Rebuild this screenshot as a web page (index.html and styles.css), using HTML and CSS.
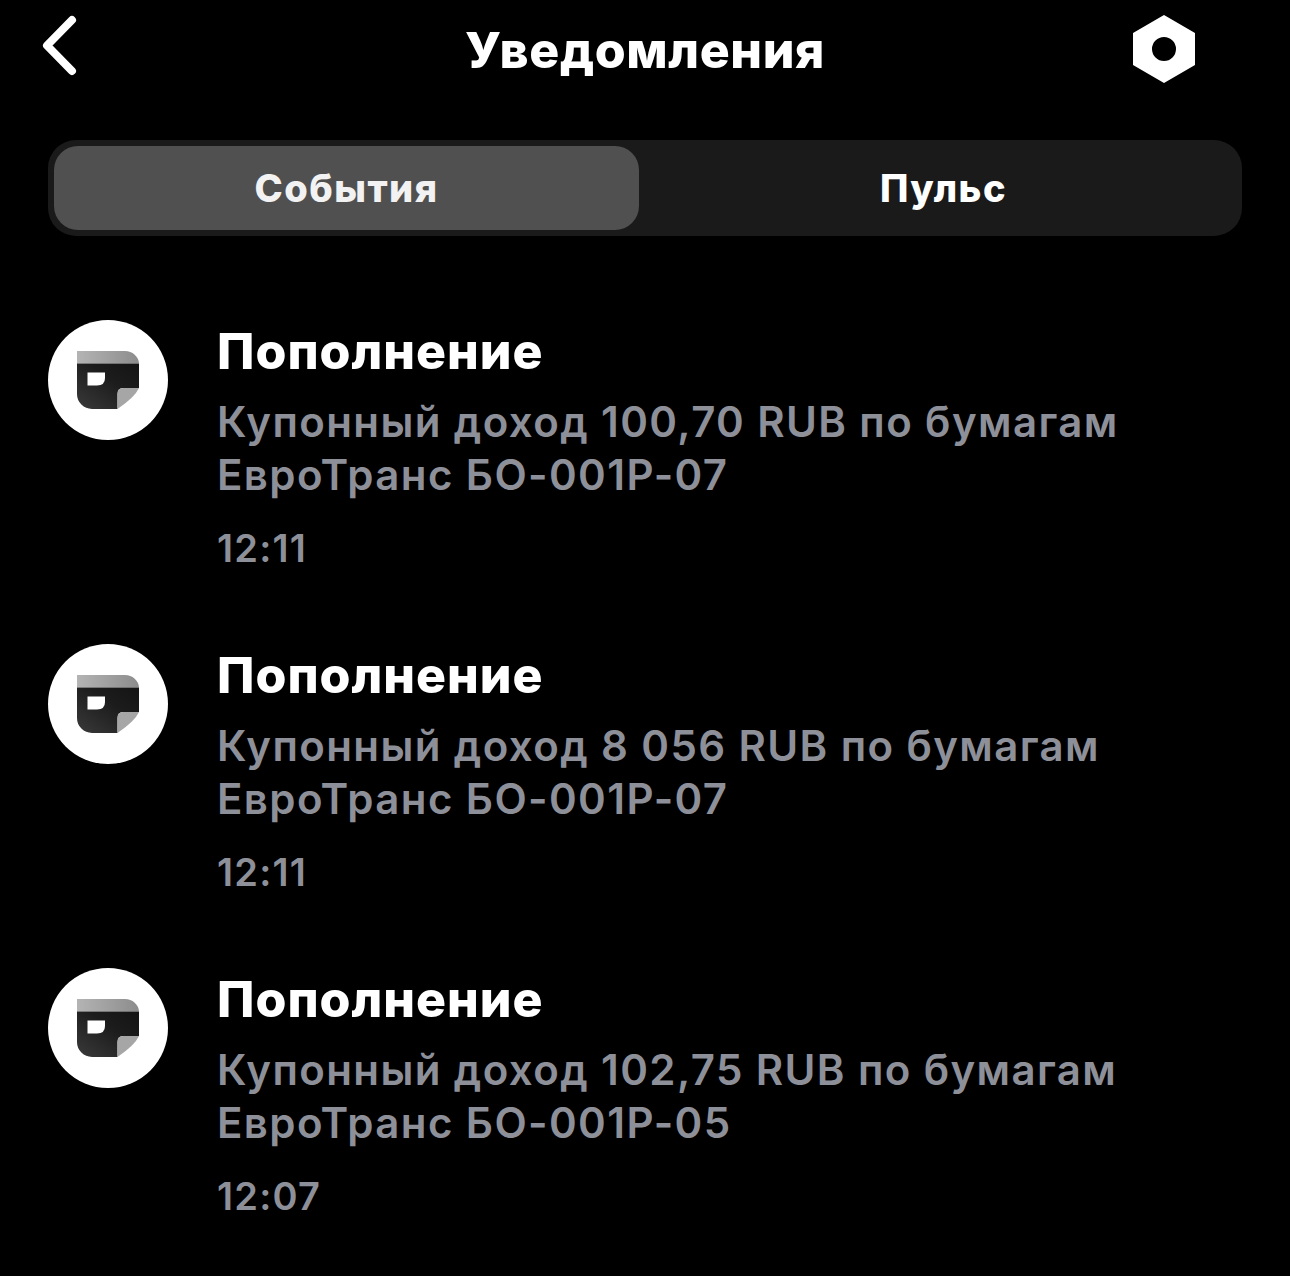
FILE: index.html
```html
<!DOCTYPE html>
<html>
<head>
    <title>Уведомления</title>
    <link rel="stylesheet" href="styles.css">
</head>
<body>
    <div class="header">
        <svg class="back" width="40" height="64" viewBox="0 0 40 64">
            <path d="M32 6 L7 31.5 L32 57" fill="none" stroke="#fff" stroke-width="8" stroke-linecap="round" stroke-linejoin="round"/>
        </svg>
        <h1>Уведомления</h1>
        <svg class="gear" width="64" height="68" viewBox="0 0 64 68">
            <path fill="#fff" fill-rule="evenodd" d="M32 0 L63 18 L63 50 L32 68 L1 50 L1 18 Z M32 22 A12 12 0 1 0 32 46 A12 12 0 1 0 32 22 Z"/>
        </svg>
    </div>

    <div class="tabs">
        <div class="tab active">События</div>
        <div class="tab">Пульс</div>
    </div>

    <div class="list">
        <div class="item">
            <div class="avatar">
                <svg width="62" height="58" viewBox="0 0 62 58">
                    <use href="#note"/>
                </svg>
            </div>
            <div class="text">
                <div class="name">Пополнение</div>
                <div class="desc">Купонный доход 100,70 RUB по бумагам<br>ЕвроТранс БО-001Р-07</div>
                <div class="time">12:11</div>
            </div>
        </div>
        <div class="item">
            <div class="avatar">
                <svg width="62" height="58" viewBox="0 0 62 58">
                    <use href="#note"/>
                </svg>
            </div>
            <div class="text">
                <div class="name">Пополнение</div>
                <div class="desc">Купонный доход 8 056 RUB по бумагам<br>ЕвроТранс БО-001Р-07</div>
                <div class="time">12:11</div>
            </div>
        </div>
        <div class="item">
            <div class="avatar">
                <svg width="62" height="58" viewBox="0 0 62 58">
                    <use href="#note"/>
                </svg>
            </div>
            <div class="text">
                <div class="name">Пополнение</div>
                <div class="desc">Купонный доход 102,75 RUB по бумагам<br>ЕвроТранс БО-001Р-05</div>
                <div class="time">12:07</div>
            </div>
        </div>
    </div>

    <svg class="defs" width="0" height="0">
        <defs>
            <linearGradient id="noteFill" x1="0" y1="1" x2="1" y2="0">
                <stop offset="0" stop-color="#3a3a3a"/>
                <stop offset="0.6" stop-color="#1c1c1c"/>
                <stop offset="1" stop-color="#141414"/>
            </linearGradient>
            <linearGradient id="bandFill" x1="0" y1="0" x2="1" y2="0">
                <stop offset="0" stop-color="#b4b4b4"/>
                <stop offset="1" stop-color="#8c8c8c"/>
            </linearGradient>
            <g id="note">
                <path fill="url(#bandFill)" d="M0 0 H48 A14 13 0 0 1 62 12.5 H0 Z"/>
                <path fill="url(#noteFill)" d="M0 12.5 H62 V37 H46 Q40.5 37 40.5 43 V58 H15 A15 15 0 0 1 0 43 Z"/>
                <path fill="#a6a6a6" d="M40.5 58 V43 Q40.5 37 46 37 H62 Q58 46 40.5 58 Z"/>
                <path fill="#fff" d="M10.5 21.5 H28 V27 Q28 34.5 20 34.5 H10.5 Z"/>
            </g>
        </defs>
    </svg>
</body>
</html>
```

FILE: styles.css
```css
body {
    margin: 0;
    padding: 0 48px;
    background: #000;
    font-family: Inter, "Noto Sans", sans-serif;
    color: #fff;
}
.header {
    display: grid;
    grid-template-columns: 1fr auto 1fr;
    align-items: center;
    height: 100px;
    margin-bottom: 40px;
}
.header h1 {
    margin: 0;
    font-size: 50px;
    font-weight: 800;
    letter-spacing: 0.6px;
}
.back { margin-left: -8px; margin-top: -8px; }
.gear { justify-self: end; margin-right: 46px; margin-top: -2px; }
.tabs {
    display: flex;
    height: 96px;
    padding: 6px;
    box-sizing: border-box;
    background: #1a1a1a;
    border-radius: 28px;
    margin-bottom: 84px;
}
.tab {
    flex: 1;
    display: flex;
    align-items: center;
    justify-content: center;
    padding-left: 12px;
    font-size: 38px;
    font-weight: 800;
    letter-spacing: 1.5px;
    border-radius: 24px;
}
.tab.active { background: #505050; color: #f2f2f2; flex: 0 0 585px; padding-left: 0; box-sizing: border-box; }
.item {
    display: flex;
    gap: 49px;
    height: 324px;
}
.avatar {
    width: 120px;
    height: 120px;
    border-radius: 50%;
    background: #fff;
    display: flex;
    align-items: center;
    justify-content: center;
    flex-shrink: 0;
}
.name { font-size: 50px; font-weight: 800; letter-spacing: 1px; line-height: 64px; margin-top: -1px; }
.desc { font-size: 42px; line-height: 53px; color: #8e9099; margin-top: 12px; font-weight: 600; letter-spacing: 1.4px; }
.time { font-size: 38px; line-height: 48px; color: #8e9099; margin-top: 23px; font-weight: 600; letter-spacing: 1.2px; }
.defs { position: absolute; }
```
